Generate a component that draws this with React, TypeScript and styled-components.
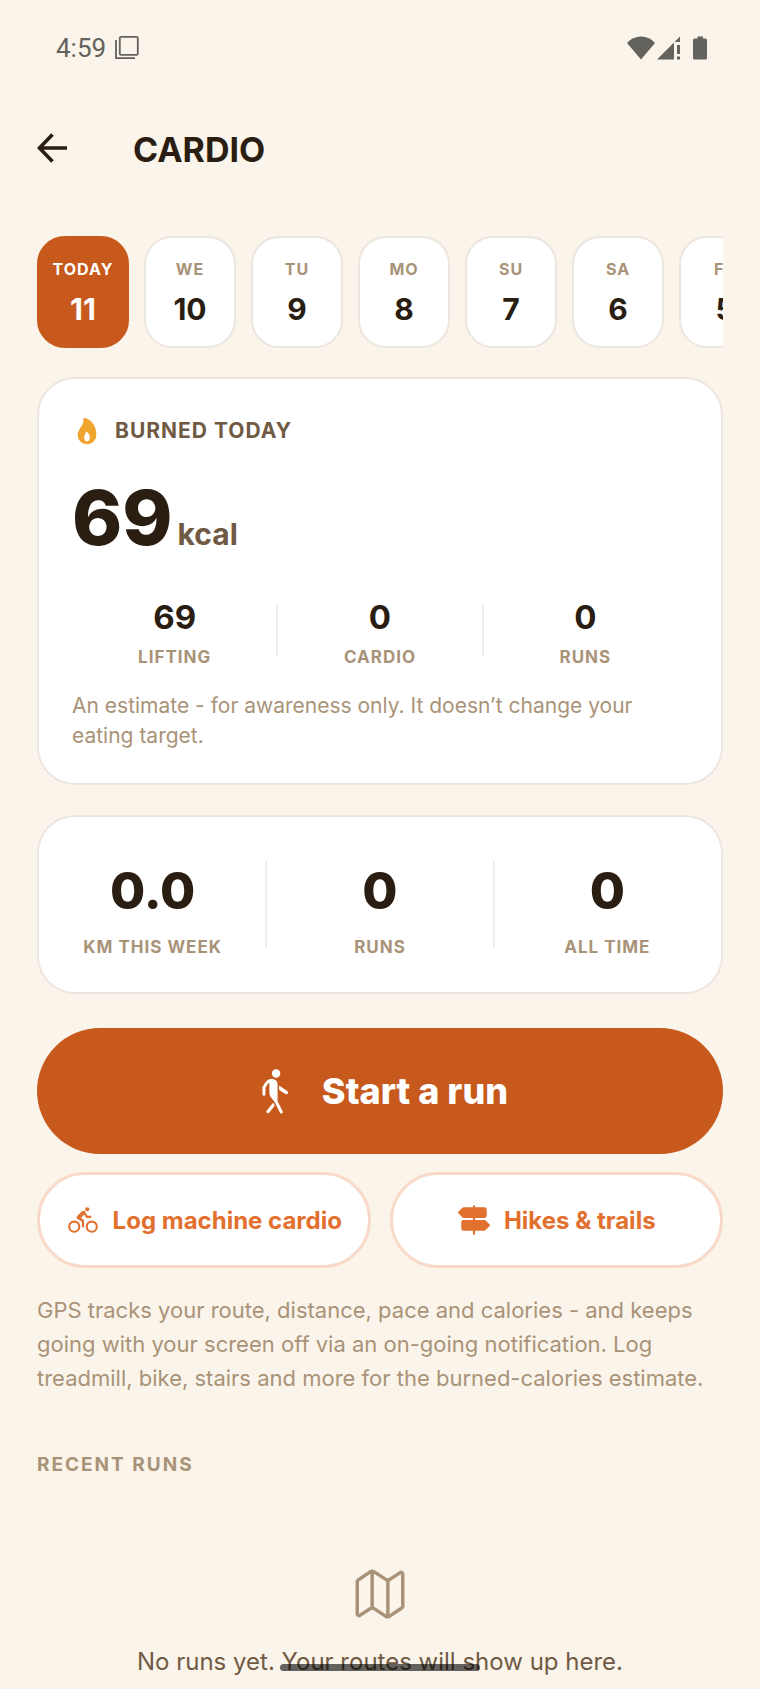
import React from "react";
import styled, { createGlobalStyle } from "styled-components";
import { IoBicycle, IoFlame, IoMapOutline, IoTrailSign, IoWalk } from "react-icons/io5";

const color = {
  page: "#fbf4ea",
  card: "#ffffff",
  line: "#ebe6df",
  divider: "#eeeeec",
  ink: "#2a1d12",
  brown: "#705a44",
  muted: "#a99378",
  accent: "#c7591c",
  orange: "#e2702e",
  orangeSoft: "#f8d9c9",
  amber: "#f0a52f",
  system: "#64625d",
};

const GlobalStyle = createGlobalStyle`
  * { box-sizing: border-box; }
  body {
    margin: 0;
    background: ${color.page};
    color: ${color.ink};
    font-family: Inter, "Liberation Sans", sans-serif;
  }
  button { font: inherit; cursor: pointer; }
  h1, h2, p, dl, dd, dt { margin: 0; }
`;

const Screen = styled.div`
  min-height: 100vh;
  padding: 0 37px;
  overflow: hidden;
`;

const StatusBar = styled.div`
  display: flex;
  align-items: center;
  justify-content: space-between;
  height: 96px;
  padding: 0 14px 0 19px;
  color: ${color.system};
`;

const StatusGroup = styled.div`
  display: flex;
  align-items: center;
  gap: 9px;
`;

const Clock = styled.time`
  font: 400 26px/32px Roboto, sans-serif;
`;

const Header = styled.header`
  display: flex;
  align-items: center;
  gap: 66px;
  height: 104px;
`;

const BackButton = styled.button`
  display: flex;
  padding: 0;
  border: 0;
  background: none;
  color: ${color.ink};
`;

const Title = styled.h1`
  padding-top: 4px;
  font-size: 34px;
  line-height: 40px;
  font-weight: 700;
`;

const DayStrip = styled.div`
  display: flex;
  gap: 15px;
  margin: 36px 0 29px;
  overflow: hidden;
`;

const DayButton = styled.button<{ $active?: boolean }>`
  flex: 0 0 92px;
  display: flex;
  flex-direction: column;
  align-items: center;
  gap: 12px;
  height: 112px;
  padding: 21px 0 0;
  border: 2px solid ${(p) => (p.$active ? color.accent : color.line)};
  border-radius: 28px;
  background: ${(p) => (p.$active ? color.accent : color.card)};
  color: ${(p) => (p.$active ? "#fff" : color.ink)};
`;

const DayName = styled.span<{ $active?: boolean }>`
  font-size: 16px;
  line-height: 20px;
  font-weight: 700;
  letter-spacing: 1px;
  color: ${(p) => (p.$active ? "#fff" : color.muted)};
`;

const DayNumber = styled.span`
  font-size: 30px;
  line-height: 36px;
  font-weight: 700;
`;

const Card = styled.section`
  margin-bottom: 30px;
  border: 2px solid ${color.line};
  border-radius: 38px;
  background: ${color.card};
`;

const BurnedCard = styled(Card)`
  padding: 36px 33px 32px;
`;

const CardHeading = styled.div`
  display: flex;
  align-items: center;
  gap: 13px;
  height: 32px;
  color: ${color.amber};
`;

const CardTitle = styled.h2`
  font-size: 21px;
  line-height: 32px;
  font-weight: 700;
  letter-spacing: 1px;
  color: ${color.brown};
`;

const Total = styled.p`
  display: flex;
  align-items: baseline;
  gap: 5px;
  margin-top: 22px;
  font-size: 76px;
  line-height: 96px;
  font-weight: 800;
`;

const Unit = styled.span`
  font-size: 30px;
  line-height: 36px;
  font-weight: 700;
  color: ${color.brown};
`;

const Stats = styled.dl<{ $large?: boolean }>`
  display: grid;
  grid-template-columns: repeat(3, 1fr);
  margin: ${(p) => (p.$large ? "44px 0 29px" : "39px 0 0")};
`;

const Stat = styled.div<{ $large?: boolean }>`
  position: relative;
  display: flex;
  flex-direction: column;
  align-items: center;
  gap: 10px;

  & + &::before {
    content: "";
    position: absolute;
    top: 0;
    left: -1px;
    width: 2px;
    height: ${(p) => (p.$large ? 87 : 52)}px;
    background: ${color.divider};
  }
`;

const StatValue = styled.dd<{ $large?: boolean }>`
  order: 1;
  font-size: ${(p) => (p.$large ? 51 : 33)}px;
  line-height: ${(p) => (p.$large ? 60 : 27)}px;
  font-weight: ${(p) => (p.$large ? 800 : 700)};
`;

const StatLabel = styled.dt`
  order: 2;
  font-size: 17px;
  line-height: 32px;
  font-weight: 700;
  letter-spacing: 1px;
  color: ${color.muted};
`;

const Note = styled.p`
  margin-top: 18px;
  font-size: 21px;
  line-height: 30px;
  color: ${color.muted};
`;

const StartButton = styled.button`
  display: flex;
  align-items: center;
  justify-content: center;
  gap: 22px;
  width: 100%;
  height: 126px;
  margin-top: 34px;
  border: 0;
  border-radius: 63px;
  background: ${color.accent};
  color: #fff;
  font-size: 36px;
  font-weight: 800;
`;

const Actions = styled.div`
  display: grid;
  grid-template-columns: 1fr 1fr;
  gap: 19px;
  margin-top: 18px;
`;

const OutlineButton = styled.button`
  display: flex;
  align-items: center;
  justify-content: center;
  gap: 13px;
  height: 96px;
  padding: 0;
  border: 3px solid ${color.orangeSoft};
  border-radius: 48px;
  background: ${color.card};
  color: ${color.orange};
  font-size: 24px;
  font-weight: 700;
  white-space: nowrap;
`;

const Hint = styled.p`
  margin-top: 25px;
  font-size: 22px;
  line-height: 34px;
  color: ${color.muted};
`;

const SectionTitle = styled.h2`
  margin-top: 58px;
  font-size: 19px;
  line-height: 24px;
  font-weight: 700;
  letter-spacing: 2px;
  color: ${color.muted};
`;

const EmptyState = styled.div`
  display: flex;
  flex-direction: column;
  align-items: center;
  gap: 22px;
  margin-top: 89px;
  color: ${color.muted};
`;

const EmptyText = styled.p`
  font-size: 24px;
  line-height: 36px;
  color: ${color.brown};
`;

const HomeIndicator = styled.div`
  position: fixed;
  bottom: 18px;
  left: 50%;
  width: 200px;
  height: 7px;
  margin-left: -100px;
  border-radius: 4px;
  background: rgba(0, 0, 0, 0.6);
`;

const days = [
  ["TODAY", "11"],
  ["WE", "10"],
  ["TU", "9"],
  ["MO", "8"],
  ["SU", "7"],
  ["SA", "6"],
  ["FR", "5"],
];

const burned = [
  ["LIFTING", "69"],
  ["CARDIO", "0"],
  ["RUNS", "0"],
];

const totals = [
  ["KM THIS WEEK", "0.0"],
  ["RUNS", "0"],
  ["ALL TIME", "0"],
];

function StatList({ items, large }: { items: string[][]; large?: boolean }) {
  return (
    <Stats $large={large}>
      {items.map(([label, value]) => (
        <Stat key={label} $large={large}>
          <StatLabel>{label}</StatLabel>
          <StatValue $large={large}>{value}</StatValue>
        </Stat>
      ))}
    </Stats>
  );
}

export default function App() {
  return (
    <>
      <GlobalStyle />
      <Screen>
        <StatusBar>
          <StatusGroup>
            <Clock>4:59</Clock>
            <svg width="24" height="24" viewBox="0 0 24 24" fill="none" stroke="currentColor" strokeWidth="1.8" aria-hidden="true">
              <rect x="4.8" y="0.9" width="18" height="18" rx="1.2" />
              <path d="M1 4v18.2h19" />
            </svg>
          </StatusGroup>
          <svg width="82" height="24" viewBox="0 0 82 24" fill="currentColor" aria-hidden="true">
            <path d="M0 7Q5.500 .5 14 .5T28 7L14 23.500Z" />
            <path d="M30 23.500L47 6.500v17zM47.500 6L53 .5V6zM50 9h3v9h-3zM50 20.500h3v3h-3z" />
            <path d="M70.500 .5h5.500v2h2.500q1.500 0 1.500 1.500v18q0 1.500-1.500 1.500h-11q-1.500 0-1.500-1.500V4q0-1.500 1.500-1.500h3z" />
          </svg>
        </StatusBar>

        <Header>
          <BackButton aria-label="Back">
            <svg width="30" height="30" viewBox="0 0 30 30" fill="none" stroke="currentColor" strokeWidth="3.600" aria-hidden="true">
              <path d="M15.500 1.500L2.500 15l13 13.500M2.500 15H30" />
            </svg>
          </BackButton>
          <Title>CARDIO</Title>
        </Header>

        <main>
          <DayStrip>
            {days.map(([name, num], i) => (
              <DayButton key={name} $active={i === 0}>
                <DayName $active={i === 0}>{name}</DayName>
                <DayNumber>{num}</DayNumber>
              </DayButton>
            ))}
          </DayStrip>

          <BurnedCard>
            <CardHeading>
              <IoFlame size={30} aria-hidden="true" />
              <CardTitle>BURNED TODAY</CardTitle>
            </CardHeading>
            <Total>
              69<Unit>kcal</Unit>
            </Total>
            <StatList items={burned} />
            <Note>An estimate - for awareness only. It doesn’t change your eating target.</Note>
          </BurnedCard>

          <Card>
            <StatList items={totals} large />
          </Card>

          <StartButton>
            <IoWalk size={48} aria-hidden="true" />
            Start a run
          </StartButton>
          <Actions>
            <OutlineButton>
              <IoBicycle size={34} aria-hidden="true" />
              Log machine cardio
            </OutlineButton>
            <OutlineButton>
              <IoTrailSign size={34} aria-hidden="true" />
              Hikes &amp; trails
            </OutlineButton>
          </Actions>
          <Hint>
            GPS tracks your route, distance, pace and calories - and keeps going with your screen off via an on-going
            notification. Log treadmill, bike, stairs and more for the burned-calories estimate.
          </Hint>

          <SectionTitle>RECENT RUNS</SectionTitle>
          <EmptyState>
            <IoMapOutline size={56} aria-hidden="true" />
            <EmptyText>No runs yet. Your routes will show up here.</EmptyText>
          </EmptyState>
        </main>
      </Screen>
      <HomeIndicator />
    </>
  );
}
